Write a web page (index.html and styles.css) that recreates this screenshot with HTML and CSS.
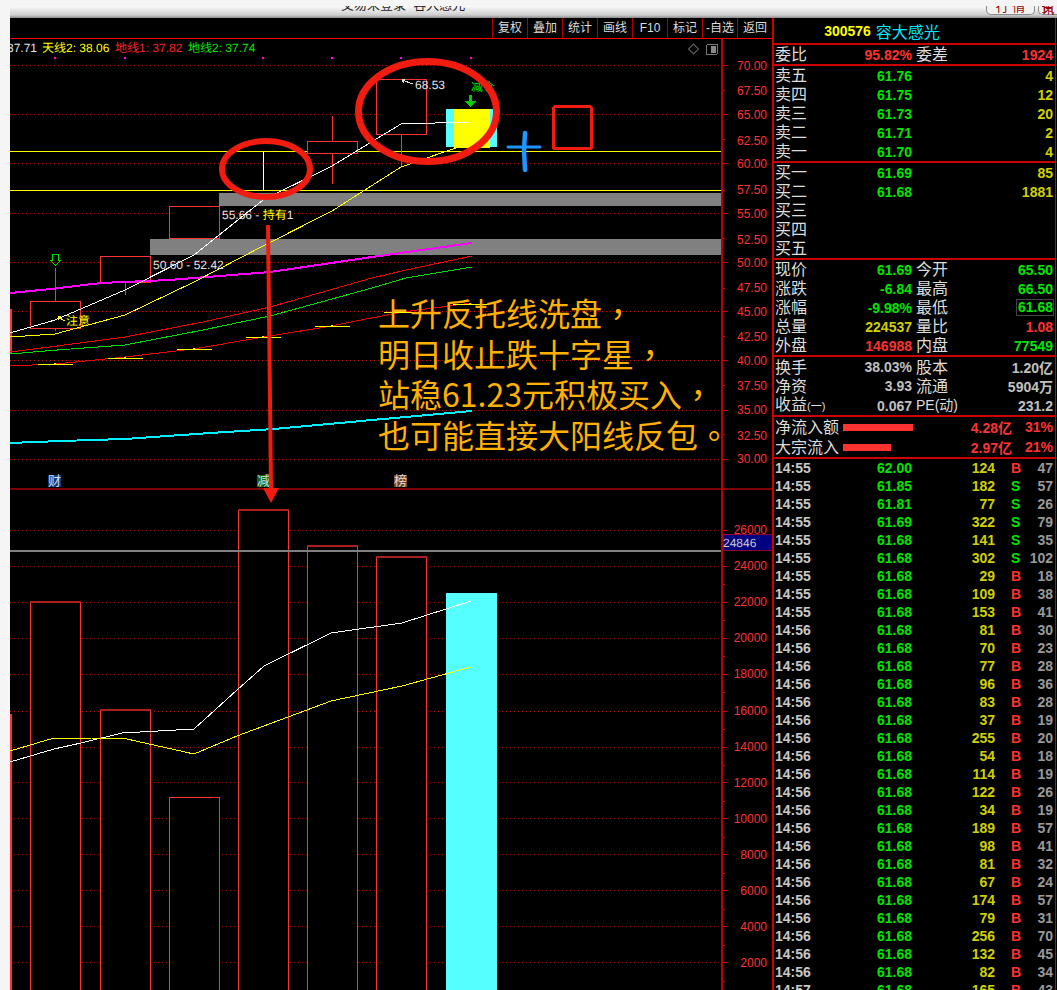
FILE: index.html
```html
<!DOCTYPE html>
<html lang="zh-CN">
<head>
    <meta charset="UTF-8">
    <title>容大感光</title>
    <link rel="stylesheet" href="styles.css">
</head>
<body>
<div class="titlebar">
    <span class="title">交易未登录&nbsp;&nbsp;容大感光</span>
    <span class="tab">行 情</span>
    <span class="tab tab-cut">资讯</span>
</div>
<div class="main">
    <div class="left">
        <div class="toolbar">
            <span>复权</span><span>叠加</span><span>统计</span><span>画线</span><span>F10</span><span>标记</span><span>-自选</span><span>返回</span>
        </div>
        <div class="chart">
            <svg class="plot" width="762" height="951" viewBox="10 39 762 951">
                <!-- 网格 -->
                <path class="grid" d="M10 65.5H721M10 114.5H721M10 163.5H721M10 213.5H721M10 262.5H721M10 311.5H721M10 360.5H721M10 410.5H721M10 459.5H721"/>
                <path class="grid grid-dark" d="M10 530.5H721M10 566.5H721M10 602.5H721M10 638.5H721M10 674.5H721M10 711.5H721M10 747.5H721M10 782.5H721M10 818.5H721M10 854.5H721M10 890.5H721M10 926.5H721M10 962.5H721"/>

                <!-- 上图 水平线 和 灰色区间 -->
                <rect class="band" x="219" y="193" width="502" height="13"/>
                <rect class="band" x="150" y="239" width="571" height="16"/>
                <path class="hline" d="M10 151.5H721M10 190.5H721"/>

                <!-- 蜡烛 -->
                <path class="wick" d="M55.5 268V301M55.5 328V331M125.5 282V295M194.5 239V239M332.5 116V184M401.5 135V167"/>
                <rect class="candle" x="10.5" y="309.5" width="1" height="43"/>
                <rect class="candle" x="30.5" y="301.5" width="50" height="27"/>
                <rect class="candle" x="100.5" y="256.5" width="50" height="26"/>
                <rect class="candle" x="169.5" y="206.5" width="50" height="32"/>
                <rect class="candle" x="307.5" y="141.5" width="50" height="12"/>
                <rect class="candle" x="376.5" y="79.5" width="50" height="55"/>
                <path class="doji" d="M263.5 152V191"/>
                <rect class="fill-cyan" x="446" y="109" width="51" height="38"/>
                <rect class="fill-yellow" x="454" y="109" width="36" height="39"/>

                <!-- 均线 -->
                <polyline class="ln ln-cyan" points="10,443 34,442 91,440 125,439 210,433 274,429 372,420 472,411"/>
                <polyline class="ln ln-magenta" points="10,293 51,289 101,283 169,280 270,272 372,257 472,243"/>
                <polyline class="ln ln-red" points="10,352 57,346 125,337 203,322 270,307 372,278 406,270 472,256"/>
                <polyline class="ln ln-green" points="10,354 57,350 125,345 203,330 270,316 372,288 406,278 472,267"/>
                <polyline class="ln ln-red" points="10,366 55,364 125,357 193,349 264,337 331,326 402,312 472,303"/>
                <polyline class="ln ln-yellow" points="10,337 55,334 125,315 194,282 263,246 332,211 401,167 470,143"/>
                <polyline class="ln ln-white" points="10,333 55,320 125,290 194,255 263,200 332,166 401,124 470,122"/>

                <!-- 十字星标记 -->
                <path class="hline" d="M38 364.5H73M108 358.5H143M177 349.5H212M246 337.5H281M315 326.5H350M384 312.5H419M453 304.5H488"/>
                <g class="dot">
                    <circle cx="55" cy="364" r="1.5"/><circle cx="125" cy="358" r="1.5"/><circle cx="194" cy="349" r="1.5"/><circle cx="263" cy="337" r="1.5"/><circle cx="332" cy="326" r="1.5"/><circle cx="401" cy="312" r="1.5"/><circle cx="470" cy="304" r="1.5"/>
                </g>
                <g class="dot-magenta">
                    <rect x="54" y="57" width="2" height="2"/><rect x="124" y="57" width="2" height="2"/><rect x="262" y="57" width="2" height="2"/><rect x="331" y="57" width="2" height="2"/><rect x="400" y="57" width="2" height="2"/><rect x="470" y="57" width="2" height="2"/>
                </g>

                <!-- 箭头和文字 -->
                <polygon class="arrow-open" points="52.5,254.5 58.5,254.5 58.5,260.5 60.5,260.5 55.5,265.5 50.5,260.5 52.5,260.5"/>
                <polygon class="arrow-solid" points="469,95 472,95 472,101 476,101 470.5,107 465,101 469,101"/>
                <text class="t t-green" x="471" y="91">减仓</text>
                <path class="pointer" d="M402 80L413 84M402 80L405 79M402 80L404 83"/>
                <text class="t t-white" x="415" y="89">68.53</text>
                <text class="t t-white" x="222" y="219">55.66 - <tspan class="t-yellow">持有</tspan>1</text>
                <text class="t t-white" x="153" y="269">50.60 - 52.42</text>
                <path class="pointer pointer-yellow" d="M58 317L65 321M58 317L61 316M58 317L59 320"/>
                <text class="t t-yellow" x="66" y="325">注意</text>

                <!-- 顶部图例 -->
                <text class="t t-white" x="7" y="52">37.71</text>
                <text class="t t-yellow" x="42" y="52">天线2: 38.06</text>
                <text class="t t-red" x="115" y="52">地线1: 37.82</text>
                <text class="t t-green" x="188" y="52">地线2: 37.74</text>
                <rect class="ic-diamond" x="690" y="45.5" width="7" height="7" transform="rotate(45 693.5 49)"/>
                <rect class="ic-box" x="706.5" y="44.5" width="11" height="10" rx="1.5"/>
                <rect class="ic-box-in" x="711" y="46" width="5" height="7"/>

                <!-- 财 减 榜 -->
                <rect class="tag-blue" x="48" y="475" width="13" height="12"/>
                <rect class="tag-green" x="257" y="475" width="13" height="12"/>
                <rect class="tag-brown" x="394" y="475" width="13" height="12"/>
                <text class="t-tag" x="48" y="485">财</text>
                <text class="t-tag" x="257" y="485">减</text>
                <text class="t-tag" x="394" y="485">榜</text>

                <!-- 下图 成交量 -->
                <rect class="sep" x="10" y="488" width="762" height="2"/>
                <rect class="bar" x="10.5" y="714.5" width="1" height="290"/>
                <rect class="bar" x="30.5" y="601.5" width="50" height="400"/>
                <rect class="bar" x="100.5" y="709.5" width="50" height="300"/>
                <rect class="bar" x="169.5" y="797.5" width="50" height="200"/>
                <rect class="bar" x="238.5" y="509.5" width="50" height="500"/>
                <rect class="bar" x="307.5" y="545.5" width="50" height="500"/>
                <rect class="bar" x="376.5" y="556.5" width="50" height="500"/>
                <rect class="fill-vol" x="446" y="593" width="51" height="400"/>
                <path class="bar-top" d="M238 509.5H289M307 545.5H358M376 556.5H427M30 601.5H81M100 709.5H151"/>
                <rect class="gray-line" x="10" y="550" width="711" height="2"/>
                <polyline class="ln ln-white" points="10,762 54,749 81,743 122,733 194,729 237,690 264,666 331,633 402,623 446,609 471,601"/>
                <polyline class="ln ln-yellow" points="10,751 54,738 91,738 127,739 194,754 237,736 331,701 402,686 471,667"/>

                <!-- 坐标轴 -->
                <rect class="axis" x="721" y="39" width="2" height="951"/>
                <path class="tick" d="M723 65.5H728M723 114.5H728M723 163.5H728M723 213.5H728M723 262.5H728M723 311.5H728M723 360.5H728M723 410.5H728M723 459.5H728M723 90.5H725M723 139.5H725M723 190.5H725M723 238.5H725M723 288.5H725M723 336.5H725M723 385.5H725M723 434.5H725"/>
                <path class="tick" d="M723 530.5H727M723 566.5H727M723 602.5H727M723 638.5H727M723 674.5H727M723 711.5H727M723 747.5H727M723 782.5H727M723 818.5H727M723 854.5H727M723 890.5H727M723 926.5H727M723 962.5H727M723 584.5H725M723 620.5H725M723 656.5H725M723 692.5H725M723 729.5H725M723 765.5H725M723 801.5H725M723 837.5H725M723 873.5H725M723 909.5H725M723 945.5H725M723 981.5H725"/>
                <g class="axis-txt">
                    <text x="767" y="70">70.00</text><text x="767" y="95">67.50</text><text x="767" y="119">65.00</text><text x="767" y="145">62.50</text><text x="767" y="168">60.00</text><text x="767" y="194">57.50</text><text x="767" y="218">55.00</text><text x="767" y="244">52.50</text><text x="767" y="267">50.00</text><text x="767" y="292">47.50</text><text x="767" y="316">45.00</text><text x="767" y="341">42.50</text><text x="767" y="365">40.00</text><text x="767" y="390">37.50</text><text x="767" y="414">35.00</text><text x="767" y="440">32.50</text><text x="767" y="463">30.00</text>
                    <text x="767" y="534">26000</text><text x="767" y="570">24000</text><text x="767" y="606">22000</text><text x="767" y="642">20000</text><text x="767" y="678">18000</text><text x="767" y="715">16000</text><text x="767" y="751">14000</text><text x="767" y="787">12000</text><text x="767" y="823">10000</text><text x="767" y="859">8000</text><text x="767" y="895">6000</text><text x="767" y="931">4000</text><text x="767" y="967">2000</text>
                </g>
                <rect class="vol-box" x="723" y="534.5" width="49" height="16"/>
                <text class="t t-gray" x="723" y="547">24846</text>

                <!-- 手工标注 -->
                <polygon class="mark-fill" points="266,225 270,225 273,488 279,488 271,503 263,488 269,488"/>
                <ellipse class="mark" cx="266" cy="169" rx="44" ry="28"/>
                <ellipse class="mark mark-big" cx="427.5" cy="111.5" rx="69" ry="50"/>
                <rect class="mark-box" x="553.5" y="106.5" width="38" height="42" rx="2"/>
                <path class="mark-blue" d="M508 147H540"/>
                <path class="mark-blue mark-blue-v" d="M525 133L524 150L525 170"/>
            </svg>
            <div class="note">
                <div>上升反托线洗盘<span class="punct" lang="zh-TW">，</span></div>
                <div>明日收止跌十字星<span class="punct" lang="zh-TW">，</span></div>
                <div>站稳61.23元积极买入<span class="punct" lang="zh-TW">，</span></div>
                <div>也可能直接大阳线反包<span class="punct" lang="zh-TW">。</span></div>
            </div>
        </div>
    </div>

    <div class="panel">
        <div class="sec sec-head">
            <span class="code">300576</span>
            <span class="name">容大感光</span>
        </div>
        <div class="sec">
            <div class="q"><span class="lb">委比</span><span class="v red">95.82%</span><span class="lb2">委差</span><span class="v red">1924</span></div>
        </div>
        <div class="sec">
            <div class="q"><span class="lb">卖五</span><span class="v green">61.76</span><span class="v yel col4">4</span></div>
            <div class="q"><span class="lb">卖四</span><span class="v green">61.75</span><span class="v yel col4">12</span></div>
            <div class="q"><span class="lb">卖三</span><span class="v green">61.73</span><span class="v yel col4">20</span></div>
            <div class="q"><span class="lb">卖二</span><span class="v green">61.71</span><span class="v yel col4">2</span></div>
            <div class="q"><span class="lb">卖一</span><span class="v green">61.70</span><span class="v yel col4">4</span></div>
        </div>
        <div class="sec">
            <div class="q"><span class="lb">买一</span><span class="v green">61.69</span><span class="v yel col4">85</span></div>
            <div class="q"><span class="lb">买二</span><span class="v green">61.68</span><span class="v yel col4">1881</span></div>
            <div class="q"><span class="lb">买三</span></div>
            <div class="q"><span class="lb">买四</span></div>
            <div class="q"><span class="lb">买五</span></div>
        </div>
        <div class="sec">
            <div class="q"><span class="lb">现价</span><span class="v green">61.69</span><span class="lb2">今开</span><span class="v green">65.50</span></div>
            <div class="q"><span class="lb">涨跌</span><span class="v green">-6.84</span><span class="lb2">最高</span><span class="v green">66.50</span></div>
            <div class="q"><span class="lb">涨幅</span><span class="v green">-9.98%</span><span class="lb2">最低</span><span class="v green"><span class="boxed">61.68</span></span></div>
            <div class="q"><span class="lb">总量</span><span class="v yel">224537</span><span class="lb2">量比</span><span class="v red">1.08</span></div>
            <div class="q"><span class="lb">外盘</span><span class="v red">146988</span><span class="lb2">内盘</span><span class="v green">77549</span></div>
        </div>
        <div class="sec sec-stat">
            <div class="q"><span class="lb">换手</span><span class="v gray">38.03%</span><span class="lb2">股本</span><span class="v gray">1.20亿</span></div>
            <div class="q"><span class="lb">净资</span><span class="v gray">3.93</span><span class="lb2">流通</span><span class="v gray">5904万</span></div>
            <div class="q"><span class="lb">收益<span class="lb-sm">(一)</span></span><span class="v gray">0.067</span><span class="lb2 lb-pe">PE(动)</span><span class="v gray">231.2</span></div>
        </div>
        <div class="sec">
            <div class="flow"><span class="lb">净流入额</span><span class="meter"><i class="meter-bar" style="width:70px"></i></span><span class="v red">4.28亿</span><span class="v red">31%</span></div>
            <div class="flow"><span class="lb">大宗流入</span><span class="meter"><i class="meter-bar" style="width:48px"></i></span><span class="v red">2.97亿</span><span class="v red">21%</span></div>
        </div>
        <div class="trades">
            <div class="tr"><span>14:55</span><span class="v green">62.00</span><span class="v yel">124</span><span class="bs red">B</span><span class="v dim">47</span></div>
            <div class="tr"><span>14:55</span><span class="v green">61.85</span><span class="v yel">182</span><span class="bs green">S</span><span class="v dim">57</span></div>
            <div class="tr"><span>14:55</span><span class="v green">61.81</span><span class="v yel">77</span><span class="bs green">S</span><span class="v dim">26</span></div>
            <div class="tr"><span>14:55</span><span class="v green">61.69</span><span class="v yel">322</span><span class="bs green">S</span><span class="v dim">79</span></div>
            <div class="tr"><span>14:55</span><span class="v green">61.68</span><span class="v yel">141</span><span class="bs green">S</span><span class="v dim">35</span></div>
            <div class="tr"><span>14:55</span><span class="v green">61.68</span><span class="v yel">302</span><span class="bs green">S</span><span class="v dim">102</span></div>
            <div class="tr"><span>14:55</span><span class="v green">61.68</span><span class="v yel">29</span><span class="bs red">B</span><span class="v dim">18</span></div>
            <div class="tr"><span>14:55</span><span class="v green">61.68</span><span class="v yel">109</span><span class="bs red">B</span><span class="v dim">38</span></div>
            <div class="tr"><span>14:55</span><span class="v green">61.68</span><span class="v yel">153</span><span class="bs red">B</span><span class="v dim">41</span></div>
            <div class="tr"><span>14:56</span><span class="v green">61.68</span><span class="v yel">81</span><span class="bs red">B</span><span class="v dim">30</span></div>
            <div class="tr"><span>14:56</span><span class="v green">61.68</span><span class="v yel">70</span><span class="bs red">B</span><span class="v dim">23</span></div>
            <div class="tr"><span>14:56</span><span class="v green">61.68</span><span class="v yel">77</span><span class="bs red">B</span><span class="v dim">28</span></div>
            <div class="tr"><span>14:56</span><span class="v green">61.68</span><span class="v yel">96</span><span class="bs red">B</span><span class="v dim">36</span></div>
            <div class="tr"><span>14:56</span><span class="v green">61.68</span><span class="v yel">83</span><span class="bs red">B</span><span class="v dim">28</span></div>
            <div class="tr"><span>14:56</span><span class="v green">61.68</span><span class="v yel">37</span><span class="bs red">B</span><span class="v dim">19</span></div>
            <div class="tr"><span>14:56</span><span class="v green">61.68</span><span class="v yel">255</span><span class="bs red">B</span><span class="v dim">20</span></div>
            <div class="tr"><span>14:56</span><span class="v green">61.68</span><span class="v yel">54</span><span class="bs red">B</span><span class="v dim">18</span></div>
            <div class="tr"><span>14:56</span><span class="v green">61.68</span><span class="v yel">114</span><span class="bs red">B</span><span class="v dim">19</span></div>
            <div class="tr"><span>14:56</span><span class="v green">61.68</span><span class="v yel">122</span><span class="bs red">B</span><span class="v dim">26</span></div>
            <div class="tr"><span>14:56</span><span class="v green">61.68</span><span class="v yel">34</span><span class="bs red">B</span><span class="v dim">19</span></div>
            <div class="tr"><span>14:56</span><span class="v green">61.68</span><span class="v yel">189</span><span class="bs red">B</span><span class="v dim">57</span></div>
            <div class="tr"><span>14:56</span><span class="v green">61.68</span><span class="v yel">98</span><span class="bs red">B</span><span class="v dim">41</span></div>
            <div class="tr"><span>14:56</span><span class="v green">61.68</span><span class="v yel">81</span><span class="bs red">B</span><span class="v dim">32</span></div>
            <div class="tr"><span>14:56</span><span class="v green">61.68</span><span class="v yel">67</span><span class="bs red">B</span><span class="v dim">24</span></div>
            <div class="tr"><span>14:56</span><span class="v green">61.68</span><span class="v yel">174</span><span class="bs red">B</span><span class="v dim">57</span></div>
            <div class="tr"><span>14:56</span><span class="v green">61.68</span><span class="v yel">79</span><span class="bs red">B</span><span class="v dim">31</span></div>
            <div class="tr"><span>14:56</span><span class="v green">61.68</span><span class="v yel">256</span><span class="bs red">B</span><span class="v dim">70</span></div>
            <div class="tr"><span>14:56</span><span class="v green">61.68</span><span class="v yel">132</span><span class="bs red">B</span><span class="v dim">45</span></div>
            <div class="tr"><span>14:56</span><span class="v green">61.68</span><span class="v yel">82</span><span class="bs red">B</span><span class="v dim">34</span></div>
            <div class="tr"><span>14:57</span><span class="v green">61.68</span><span class="v yel">165</span><span class="bs red">B</span><span class="v dim">43</span></div>
        </div>
    </div>
</div>
</body>
</html>
```

FILE: styles.css
```css
* {
    padding: 0;
    margin: 0;
    box-sizing: border-box;
}

html, body {
    height: 990px;
    overflow: hidden;
}

body {
    background: #f5f5f5;
    font-family: "Liberation Sans", "Noto Sans CJK SC", sans-serif;
    font-size: 12px;
}

/* 标题栏 */
.titlebar {
    display: flex;
    align-items: flex-start;
    height: 12px;
    margin: 6px 0 0 10px;
    padding-left: 331px;
    overflow: hidden;
    background: linear-gradient(#fafafa, #cfcfcf 75%, #8c8c8c);
}

.title {
    margin-top: -8px;
    font-size: 13px;
    line-height: 13px;
    color: #222;
    white-space: nowrap;
}

.tab {
    flex: none;
    width: 49px;
    height: 9px;
    margin: 0 3px 0 auto;
    border: 1px solid #8a8a8a;
    border-top: 0;
    border-radius: 0 0 5px 5px;
    background: #f2f2f2;
    color: #900;
    font-size: 13px;
    line-height: 2px;
    text-align: center;
}

.tab-cut {
    width: 19px;
    margin: 0;
    border-right: 0;
    border-radius: 0 0 0 5px;
}

/* 主体 */
.main {
    display: flex;
    height: 972px;
    margin-left: 10px;
    background: #000;
}

.left {
    flex: none;
    width: 762px;
}

.toolbar {
    display: flex;
    justify-content: flex-end;
    height: 21px;
    border-bottom: 1px solid #f00;
    color: #ddd;
}

.toolbar span {
    width: 35px;
    border-left: 1px solid #a00;
    line-height: 20px;
    text-align: center;
    white-space: nowrap;
}

.chart {
    position: relative;
    height: 951px;
    overflow: hidden;
}

.plot {
    display: block;
    shape-rendering: crispEdges;
}

.note {
    position: absolute;
    left: 368px;
    top: 253px;
    font-family: "Noto Sans CJK SC", "Liberation Sans", sans-serif;
    font-size: 32px;
    line-height: 40.7px;
    color: #ffb000;
    white-space: nowrap;
}

.punct {
    font-family: "Noto Sans CJK TC", sans-serif;
}

/* 图表元素 */
.grid { stroke: #d00000; stroke-width: 1; stroke-dasharray: 1 3; fill: none; }
.grid-dark { stroke: #c00000; }
.band { fill: #808080; }
.hline { stroke: #ffff00; fill: none; }
.wick { stroke: #f33; fill: none; }
.doji { stroke: #fff; fill: none; }
.candle { fill: #000; stroke: #f33; }
.fill-cyan { fill: #55ffff; }
.fill-yellow { fill: #ffff00; }
.ln { fill: none; stroke-width: 1; }
.ln-cyan { stroke: #00f0ff; stroke-width: 2; }
.ln-magenta { stroke: #ff00ff; stroke-width: 2; }
.ln-red { stroke: #f00000; }
.ln-green { stroke: #00e000; }
.ln-yellow { stroke: #ffff00; }
.ln-white { stroke: #fff; }
.dot { fill: #ffff00; }
.dot-magenta { fill: #ff00ff; }
.arrow-open { fill: none; stroke: #00e000; }
.arrow-solid { fill: #00d000; }
.pointer { stroke: #ddd; fill: none; }
.pointer-yellow { stroke: #ffff00; }

.t {
    font-size: 12px;
    text-rendering: geometricPrecision;
}
.t-white { fill: #e6e6e6; }
.t-yellow { fill: #ffff00; }
.t-red { fill: #ff2020; }
.t-green { fill: #00e800; }
.t-gray { fill: #ccc; }
.t-tag { font-size: 13px; fill: #ddd; }

.ic-diamond { fill: none; stroke: #666; shape-rendering: auto; }
.ic-box { fill: none; stroke: #777; }
.ic-box-in { fill: #888; }

.tag-blue { fill: #0b3a85; }
.tag-green { fill: #0a6a12; }
.tag-brown { fill: #7c4212; }

.sep { fill: #800000; }
.bar { fill: #000; stroke: #ff3232; }
.bar-top { stroke: #a82020; fill: none; stroke-width: 2; }
.fill-vol { fill: #55ffff; }
.gray-line { fill: #808080; }
.axis { fill: #b80000; }
.tick { stroke: #c80000; fill: none; }
.axis-txt text { font-size: 12px; fill: #ff3232; text-anchor: end; }
.vol-box { fill: #000080; stroke: #900030; }

.mark { fill: none; stroke: #f01c10; stroke-width: 6; shape-rendering: auto; }
.mark-big { stroke-width: 7; }
.mark-fill { fill: #f01c10; shape-rendering: auto; }
.mark-box { fill: none; stroke: #f01c10; stroke-width: 3; }
.mark-blue { stroke: #1e96ff; stroke-width: 3; stroke-linecap: round; fill: none; shape-rendering: auto; }
.mark-blue-v { stroke-width: 4.5; }

/* 右侧行情 */
.panel {
    flex: none;
    width: 284px;
    height: 972px;
    overflow: hidden;
    border-left: 2px solid #c00;
    border-right: 1px solid #c00;
    color: #ddd;
    font-size: 14px;
}

.sec {
    padding: 0 2px 0 1px;
    border-bottom: 2px solid #c00;
}

.sec-head {
    display: flex;
    justify-content: center;
    align-items: center;
    gap: 5px;
    height: 27px;
    padding-right: 66px;
}

.code {
    color: #ffff00;
    font-weight: bold;
    font-size: 14px;
}

.name {
    color: #00e8ff;
    font-size: 16px;
}

.sec-stat {
    padding-bottom: 1px;
}

.q {
    display: grid;
    grid-template-columns: 40px 97px 44px 97px;
    height: 19px;
    align-items: center;
    white-space: nowrap;
}

.lb, .lb2 {
    font-size: 16px;
    line-height: 19px;
    color: #ddd;
}

.lb2 {
    padding-left: 4px;
}

.lb-sm {
    font-size: 11px;
}

.lb-pe {
    font-size: 14px;
}

.v {
    font-weight: bold;
    text-align: right;
    white-space: nowrap;
}

.col4 {
    grid-column: 4;
}

.green { color: #00e600; }
.red { color: #ff3232; }
.yel { color: #d0d000; }
.gray { color: #c0c0c0; }
.dim { color: #999; }

.boxed {
    display: inline-block;
    padding: 0 0 0 1px;
    margin-right: -1px;
    border: 1px solid #444;
    line-height: 15px;
}

.flow {
    display: grid;
    grid-template-columns: 68px 127px 42px 41px;
    height: 20px;
    align-items: center;
    white-space: nowrap;
}

.meter {
    display: flex;
    align-items: center;
}

.meter-bar {
    display: block;
    height: 7px;
    background: #ff3232;
}

.tr {
    display: grid;
    grid-template-columns: 40px 97px 83px 28px 30px;
    height: 18px;
    padding: 0 2px 0 1px;
    align-items: center;
    font-weight: bold;
    white-space: nowrap;
    color: #c8c8c8;
}

.bs {
    padding-left: 16px;
}
```
